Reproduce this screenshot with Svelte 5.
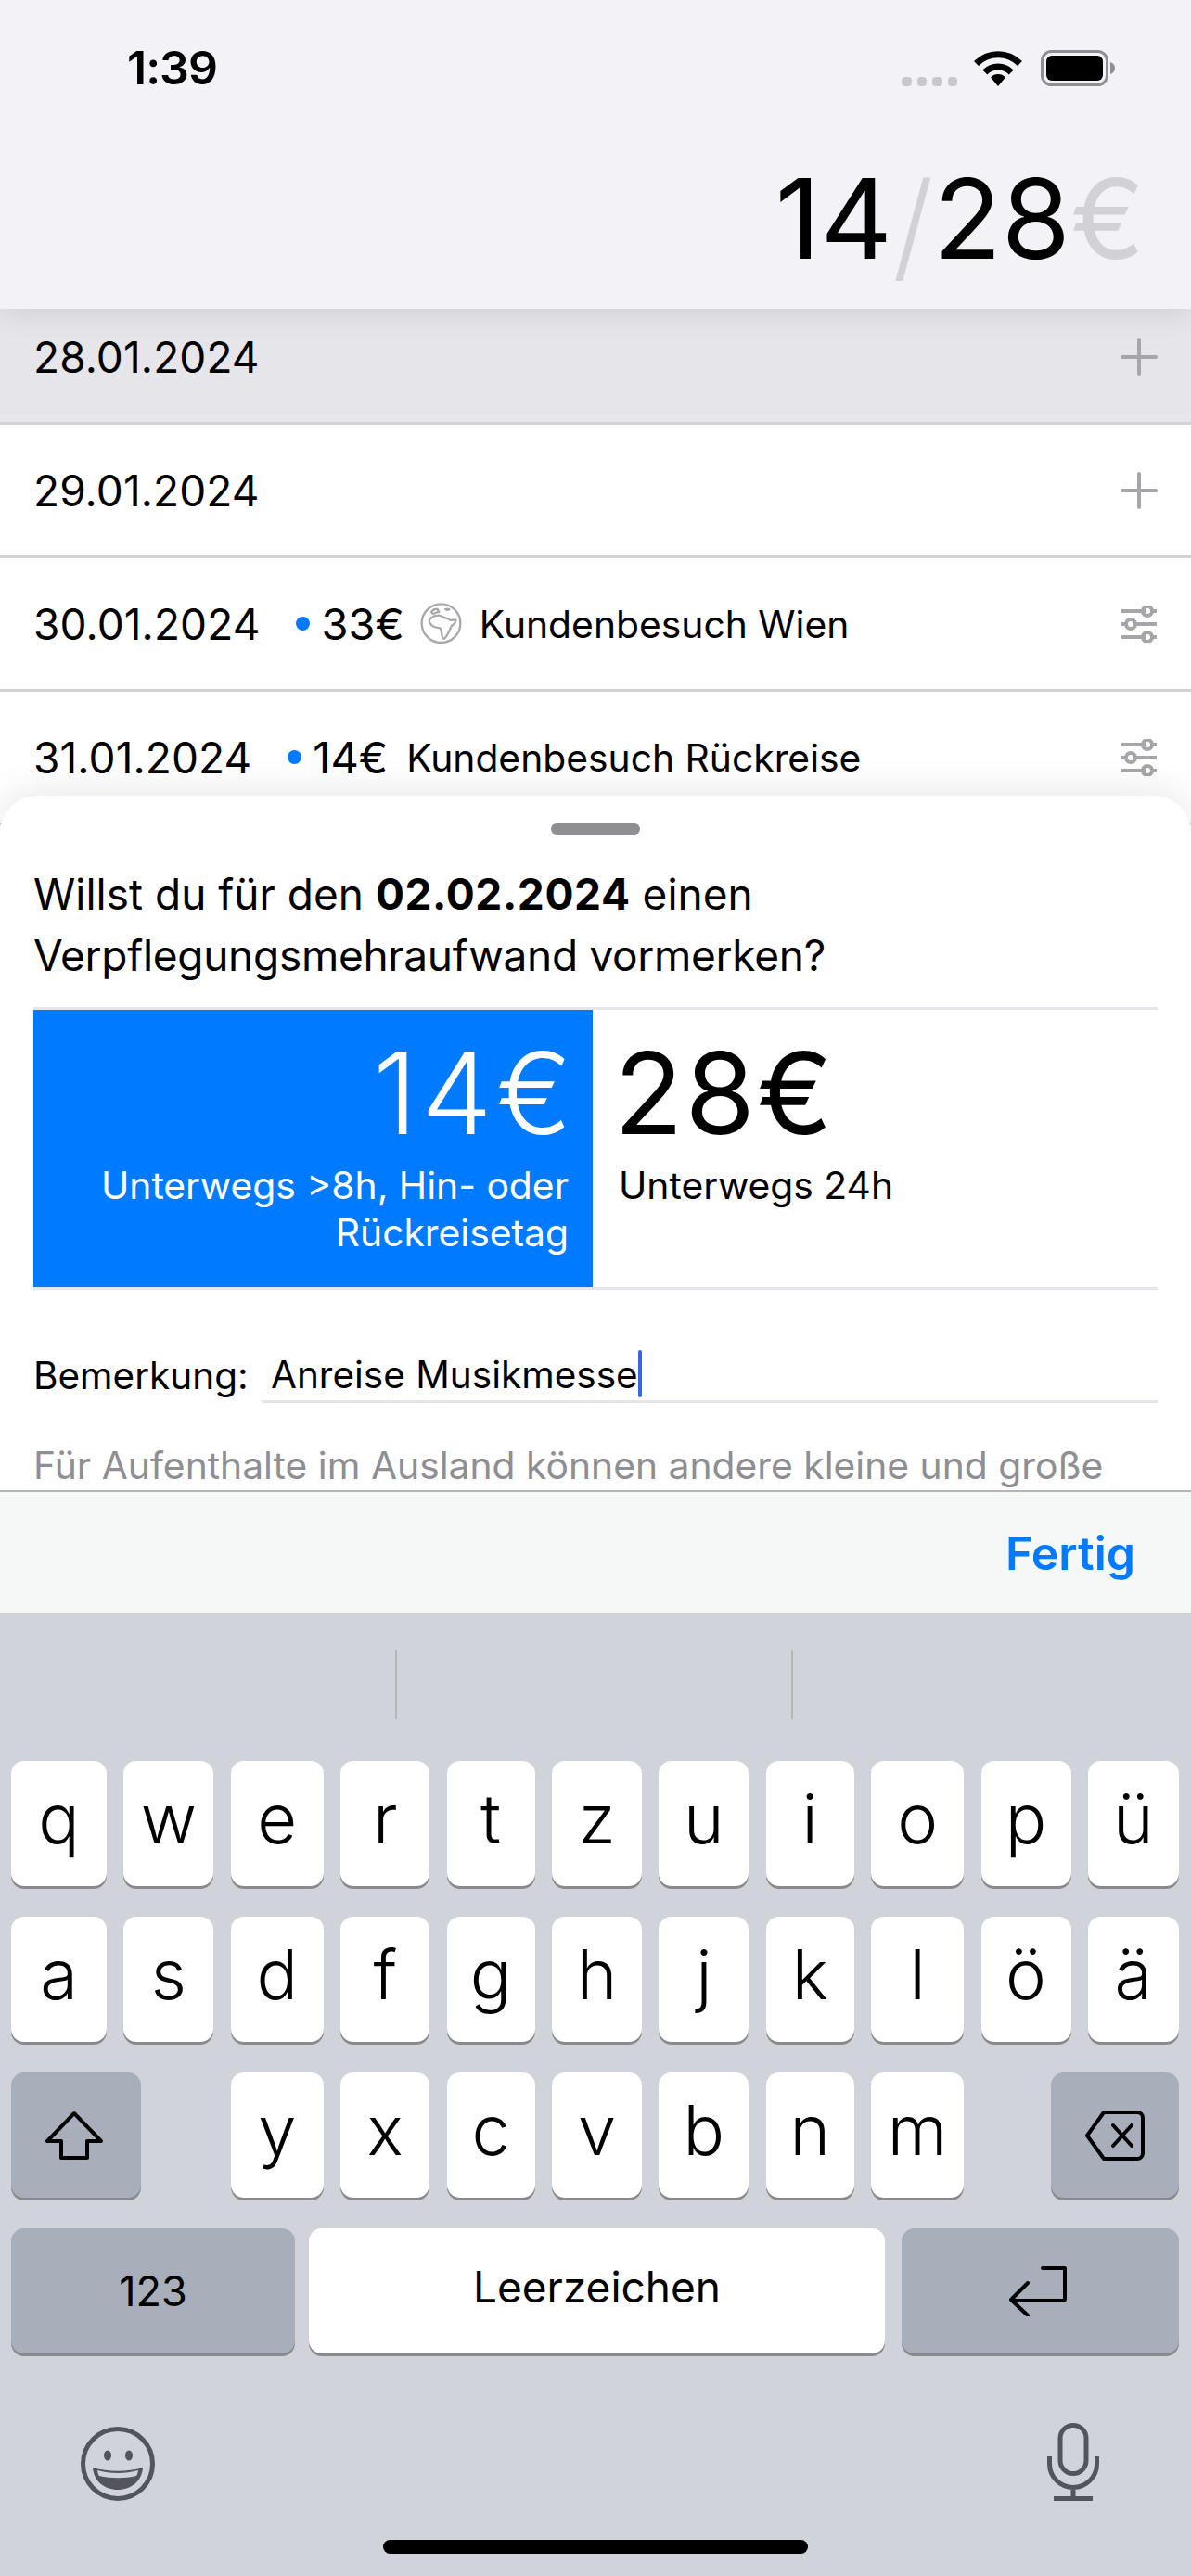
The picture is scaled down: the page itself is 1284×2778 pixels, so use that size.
<script>
    const days = [
        { date: '28.01.2024', shaded: true },
        { date: '29.01.2024' },
        { date: '30.01.2024', amount: '33€', abroad: true, note: 'Kundenbesuch Wien' },
        { date: '31.01.2024', amount: '14€', note: 'Kundenbesuch Rückreise' }
    ];
    const row1 = ['q', 'w', 'e', 'r', 't', 'z', 'u', 'i', 'o', 'p', 'ü'];
    const row2 = ['a', 's', 'd', 'f', 'g', 'h', 'j', 'k', 'l', 'ö', 'ä'];
    const row3 = ['y', 'x', 'c', 'v', 'b', 'n', 'm'];
</script>

<div class="phone">
    <div class="status">
        <span class="time">1:39</span>
        <div class="status-icons">
            <div class="signal"><i></i><i></i><i></i><i></i></div>
            <svg class="wifi" viewBox="0 0 52 38">
                <path d="M2.500 13.500a33 33 0 0 1 47 0M11.800 23a20 20 0 0 1 28.400 0" fill="none" stroke="#000" stroke-width="7"/>
                <path d="M18 28.500a11 11 0 0 1 16 0L26 38z" fill="#000"/>
            </svg>
            <svg class="battery" viewBox="0 0 80 39">
                <rect x="1.500" y="1.500" width="70" height="36" rx="10" fill="none" stroke="#8e8e93" stroke-width="3"/>
                <rect x="6" y="6" width="61" height="27" rx="6" fill="#000"/>
                <path d="M75 13c3 1 5 3.500 5 6.500s-2 5.500-5 6.500z" fill="#8e8e93"/>
            </svg>
        </div>
    </div>
    <header>
        <span class="total">14<span class="slash">/</span>28<span class="euro">€</span></span>
    </header>

    <div class="list">
        {#each days as day}
            <div class="row" class:shaded={day.shaded}>
                <span class="date">{day.date}</span>
                {#if day.amount}
                    <span class="dot"></span>
                    <span class="amount">{day.amount}</span>
                {/if}
                {#if day.abroad}
                    <svg class="globe" viewBox="0 0 136 136" fill="none" stroke="#a8a8ad" stroke-width="7" stroke-linejoin="round">
                        <circle cx="68" cy="67" r="63"/>
                        <path d="M30 56c6-9 16-14 28-15 8-1 13 4 20 7 6 3 13 2 20 9 6 1 12-3 18-1 1 7-7 15-13 19-5 6-6 15-10 21-3 6-7 14-14 21-5 1-7-4-8-11-1-9-1-17-6-23-8-1-17-2-24-7-7-5-12-12-11-20z"/>
                        <path d="M36 31c4-7 12-11 20-10 2 3 3 6 6 8-7 2-13 5-19 7-3-1-5-3-7-5zM82 21c4-2 9-1 13 1-4 2-9 2-13-1z"/>
                    </svg>
                {/if}
                {#if day.note}
                    <span class="note">{day.note}</span>
                {/if}
                <span class="spacer"></span>
                {#if day.amount}
                    <svg class="action" viewBox="0 0 40 40" fill="none" stroke="#a5a5aa" stroke-width="4">
                        <path d="M1 6h26M33 6h6M1 20h6M13 20h26M1 34h26M33 34h6"/>
                        <circle cx="29" cy="6" r="5"/>
                        <circle cx="11" cy="20" r="5"/>
                        <circle cx="29" cy="34" r="5"/>
                    </svg>
                {:else}
                    <svg class="action" viewBox="0 0 40 40" fill="none" stroke="#a5a5aa" stroke-width="4" stroke-linecap="round">
                        <path d="M2 20h36M20 2v36"/>
                    </svg>
                {/if}
            </div>
        {/each}
    </div>

    <div class="sheet">
        <div class="content">
            <div class="handle"></div>
            <p class="question"><span class="first-line">Willst du für den <b>02.02.2024</b> einen</span><br>Verpflegungsmehraufwand vormerken?</p>
            <div class="options">
                <div class="option selected">
                    <span class="price">14€</span>
                    <span class="caption">Unterwegs &gt;8h, Hin- oder Rückreisetag</span>
                </div>
                <div class="option">
                    <span class="price">28€</span>
                    <span class="caption">Unterwegs 24h</span>
                </div>
            </div>
            <div class="remark">
                <span class="remark-label">Bemerkung:</span>
                <div class="remark-field"><span>Anreise Musikmesse</span><i class="caret"></i></div>
            </div>
            <p class="hint">Für Aufenthalte im Ausland können andere kleine und große</p>
        </div>

        <div class="toolbar"><span class="done">Fertig</span></div>

        <div class="keyboard">
            <div class="suggestions"><i></i><i></i></div>
            <div class="keys">
                {#each row1 as k}<div class="key">{k}</div>{/each}
                {#each row2 as k}<div class="key">{k}</div>{/each}
                <div class="key dark shift">
                    <svg viewBox="0 0 64 54" fill="none" stroke="#000" stroke-width="4" stroke-linejoin="round">
                        <path d="M32 3 3 33h15v18h28V33h15z"/>
                    </svg>
                </div>
                {#each row3 as k}<div class="key">{k}</div>{/each}
                <div class="key dark delete">
                    <svg viewBox="0 0 64 54" fill="none" stroke="#000" stroke-width="4" stroke-linejoin="round">
                        <path d="M20 2h36a6 6 0 0 1 6 6v38a6 6 0 0 1-6 6H20L2 27z"/>
                        <path d="M30 16 50 38M50 16 30 38" stroke-linecap="round"/>
                    </svg>
                </div>
            </div>
            <div class="bottom-row">
                <div class="key dark num">123</div>
                <div class="key space">Leerzeichen</div>
                <div class="key dark enter">
                    <svg viewBox="0 0 62 54" fill="none" stroke="#000" stroke-width="4" stroke-linecap="round" stroke-linejoin="round">
                        <path d="M36 2h24v33a2 2 0 0 1-2 2H3M20 18 2 36l18 17"/>
                    </svg>
                </div>
            </div>
            <div class="system-row">
                <svg class="emoji" viewBox="0 0 80 80" fill="none">
                    <circle cx="40" cy="40" r="37.500" stroke="#50555e" stroke-width="5"/>
                    <ellipse cx="29" cy="31" rx="4" ry="5.500" fill="#50555e"/>
                    <ellipse cx="52" cy="31" rx="4" ry="5.500" fill="#50555e"/>
                    <path d="M13 44c17 5 37 5 54 0-1 15-13 24-27 24S14 59 13 44z" fill="#50555e"/>
                    <path d="M18 47c14 4 30 4 44 0-.5 3-1 5-2 6-13 3-27 3-40 0-1-1-1.500-3-2-6z" fill="#d0d3da"/>
                </svg>
                <svg class="mic" viewBox="0 0 56 84" fill="none" stroke="#50555e" stroke-width="5">
                    <rect x="14" y="2.500" width="28" height="52" rx="14"/>
                    <path d="M2.500 36v8a25.500 25.500 0 0 0 51 0v-8M28 70v12"/>
                    <path d="M7 81.500h42" stroke-width="5"/>
                </svg>
            </div>
            <div class="home"></div>
        </div>
    </div>
</div>

<style>
    :global(body) {
        margin: 0;
    }

    .phone {
        position: relative;
        width: 1284px;
        height: 2778px;
        overflow: hidden;
        background: #fff;
        color: #000;
        font-family: Inter, "Liberation Sans", sans-serif;
    }

    i {
        display: block;
    }

    .status {
        position: relative;
        z-index: 3;
        height: 140px;
        box-sizing: border-box;
        padding: 0 82px 0 137px;
        display: flex;
        align-items: center;
        justify-content: space-between;
        background: #f2f2f7;
    }

    .time {
        font-size: 50px;
        font-weight: 600;
        letter-spacing: -1px;
        margin-top: 6px;
    }

    .status-icons {
        display: flex;
        align-items: flex-end;
        margin-top: 6px;
        height: 39px;
    }

    .signal {
        display: flex;
        gap: 6px;
        margin-right: 18px;
    }

    .signal i {
        width: 10.500px;
        height: 10px;
        border-radius: 4px;
        background: #c7c7cc;
    }

    .wifi {
        width: 52px;
        height: 38px;
        margin-right: 20px;
    }

    .battery {
        width: 80px;
        height: 39px;
    }

    header {
        position: relative;
        z-index: 2;
        height: 193px;
        box-sizing: border-box;
        padding: 10px 50px 0 0;
        display: flex;
        align-items: center;
        justify-content: flex-end;
        background: #f2f2f7;
        box-shadow: 0 4px 30px rgba(0, 0, 0, 0.1);
    }

    .total {
        font-size: 120px;
        font-weight: 400;
        line-height: 1;
    }

    .slash {
        color: #d1d1d6;
        font-weight: 300;
        font-size: 128px;
        line-height: 1;
        vertical-align: -10px;
    }

    .euro {
        color: #d1d1d6;
    }

    .list {
        margin-top: -19px;
    }

    .row {
        height: 144px;
        box-sizing: border-box;
        padding: 0 36px;
        display: flex;
        align-items: center;
        border-bottom: 3px solid #d1d1d6;
        font-size: 46px;
    }

    .date {
        letter-spacing: 0.100px;
    }

    .row.shaded {
        background: #e5e5ea;
    }

    .dot {
        width: 15px;
        height: 15px;
        border-radius: 50%;
        background: #007aff;
        margin: 0 12px 0 39px;
    }

    .amount {
        font-size: 47px;
        margin-right: 20px;
    }

    .globe {
        width: 45px;
        height: 45px;
        margin: 0 19px 0 -3px;
    }

    .note {
        font-size: 40.800px;
    }

    .spacer {
        flex: 1;
    }

    .action {
        width: 40px;
        height: 40px;
    }

    .sheet {
        position: absolute;
        z-index: 4;
        left: 0;
        right: 0;
        top: 858px;
        bottom: 0;
        display: flex;
        flex-direction: column;
        background: #fff;
        border-radius: 40px 40px 0 0;
        box-shadow: 0 -6px 40px rgba(0, 0, 0, 0.09);
    }

    .content {
        height: 749px;
        box-sizing: border-box;
        padding: 30px 36px 0;
        overflow: hidden;
    }

    .handle {
        width: 96px;
        height: 12px;
        margin: 0 auto;
        border-radius: 6px;
        background: #8e8e93;
    }

    .question {
        margin: 31px 0 0;
        font-size: 46px;
        line-height: 66px;
        letter-spacing: -0.300px;
    }

    .first-line {
        letter-spacing: 0;
    }

    .first-line b {
        letter-spacing: 0.600px;
    }

    .options {
        margin-top: 23px;
        display: flex;
        height: 305px;
        box-sizing: border-box;
        border-top: 3px solid #e5e5ea;
        border-bottom: 3px solid #e5e5ea;
    }

    .option {
        flex: 1;
        display: flex;
        flex-direction: column;
        align-items: flex-start;
        padding: 25px 26px 0 28px;
        min-width: 0;
    }

    .option.selected {
        flex: none;
        width: 603px;
        box-sizing: border-box;
        align-items: flex-end;
        text-align: right;
        background: #007aff;
        color: #fff;
    }

    .price {
        font-size: 122px;
        line-height: 130px;
        letter-spacing: 2px;
        margin-left: -5px;
    }

    .selected .price {
        font-weight: 300;
        letter-spacing: 4px;
        margin: 0 -8px 0 0;
    }

    .caption {
        margin-top: 9px;
        font-size: 40.800px;
        line-height: 51px;
    }

    .remark {
        margin-top: 64px;
        display: flex;
        align-items: flex-end;
        font-size: 40.500px;
    }

    .remark-label {
        width: 246px;
        line-height: 51px;
        margin-bottom: 4px;
    }

    .remark-field {
        flex: 1;
        display: flex;
        align-items: center;
        height: 55px;
        padding-left: 10px;
        border-bottom: 3px solid #e5e5ea;
    }

    .caret {
        width: 4px;
        height: 51px;
        margin-top: -3px;
        border-radius: 2px;
        background: #3a63e8;
    }

    .hint {
        margin: 42px 0 0;
        font-size: 40.800px;
        line-height: 51px;
        color: #8e8e93;
        white-space: nowrap;
    }

    .toolbar {
        height: 133px;
        box-sizing: border-box;
        padding-right: 60px;
        display: flex;
        align-items: center;
        justify-content: flex-end;
        border-top: 2px solid #b4b4b4;
        background: #f6f7f7;
    }

    .done {
        font-size: 50px;
        font-weight: 600;
        color: #007aff;
    }

    .keyboard {
        flex: 1;
        background: #d0d3da;
        display: flex;
        flex-direction: column;
    }

    .suggestions {
        height: 159px;
        box-sizing: border-box;
        padding: 39px 0 45px 426px;
        display: flex;
        gap: 425px;
    }

    .suggestions i {
        width: 2px;
        background: #b5b7bc;
    }

    .keys {
        padding: 0 12px;
        display: grid;
        grid-template-columns: 103px 97px 100px 96px 95px 97px 97px 95px 100px 97px 98px;
        grid-auto-rows: 135px;
        column-gap: 18.400px;
        row-gap: 33px;
    }

    .key {
        display: flex;
        align-items: center;
        justify-content: center;
        border-radius: 14px;
        background: #fff;
        box-shadow: 0 3px 0 #898a8d;
        font-size: 74px;
        font-weight: 300;
        padding-bottom: 11px;
        box-sizing: border-box;
    }

    .key.dark {
        background: #a9afba;
    }

    .shift {
        grid-column: 1 / 3;
        width: 140px;
        padding: 0;
        justify-content: flex-start;
    }

    .shift svg,
    .delete svg {
        width: 64px;
        height: 54px;
        margin-left: 36px;
    }

    .delete {
        grid-column: 10 / 12;
        width: 138px;
        justify-self: end;
        padding: 0;
        justify-content: flex-start;
    }

    .delete svg {
        margin-left: 37px;
    }

    .bottom-row {
        margin-top: 33px;
        padding: 0 13px 0 12px;
        height: 135px;
        display: flex;
        gap: 15px;
    }

    .num {
        width: 306px;
        font-size: 45px;
        font-weight: 400;
        padding: 0;
    }

    .space {
        width: 621px;
        font-size: 46px;
        font-weight: 400;
        padding: 0 0 9px;
        margin-right: 3px;
    }

    .enter {
        flex: 1;
        padding: 0 6px 0 0;
    }

    .enter svg {
        width: 62px;
        height: 54px;
    }

    .system-row {
        margin-top: 75px;
        padding: 0 99px 0 87px;
        height: 84px;
        display: flex;
        justify-content: space-between;
        align-items: flex-end;
    }

    .emoji {
        width: 80px;
        height: 80px;
    }

    .mic {
        width: 56px;
        height: 84px;
    }

    .home {
        width: 458px;
        height: 15px;
        margin: 42px auto 0;
        border-radius: 8px;
        background: #000;
    }
</style>
